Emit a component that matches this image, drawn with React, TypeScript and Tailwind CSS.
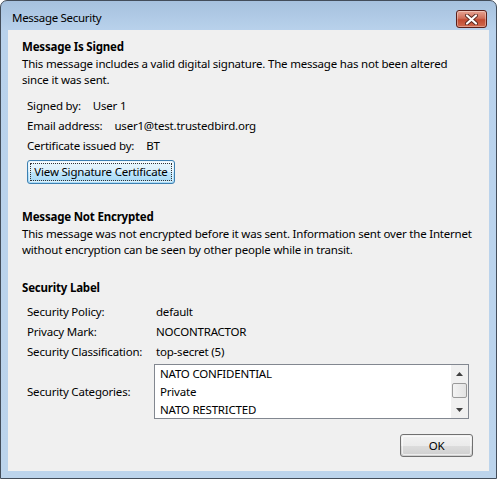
import React from "react";

const font = { fontFamily: '"Noto Sans", "Open Sans", sans-serif' };

function Win7Button({
  children,
  focused,
  className,
}: {
  children: React.ReactNode;
  focused?: boolean;
  className?: string;
}) {
  return (
    <div
      className={
        "relative flex items-center justify-center rounded-[3px] border text-black " +
        (focused
          ? "border-[#3c7fb1] bg-[linear-gradient(#eaf6fd_0%,#d9f0fc_50%,#bee6fd_50%,#a7d9f5_100%)] "
          : "border-[#707070] bg-[linear-gradient(#f2f2f2_0%,#ebebeb_50%,#dddddd_50%,#cfcfcf_100%)] ") +
        (className ?? "")
      }
    >
      <div className="absolute inset-[1px] rounded-[2px] border border-white/60" />
      {focused && (
        <div className="absolute inset-[2px] border border-dotted border-[#333]" />
      )}
      <span className="relative">{children}</span>
    </div>
  );
}

export default function App() {
  return (
    <div
      style={font}
      className="flex h-[479px] w-[497px] flex-col overflow-hidden rounded-t-[7px] border border-[#434d5a] bg-[linear-gradient(#a6c1de_0px,#b9d2ec_30px,#bcd4ec_100%)] text-[11.5px] tracking-[-0.2px] text-black"
    >
      {/* Title bar */}
      <div className="flex h-[29px] shrink-0 items-start justify-between pl-[11px] pr-[9px]">
        <div className="pt-[9px] text-[11.5px] leading-[16px] tracking-[-0.3px] text-black">
          Message Security
        </div>
        <div className="mt-[9px] flex h-[18px] w-[31px] items-center justify-center rounded-[3px] border border-[#5b1f19] bg-[linear-gradient(#e8a493_0%,#d0705b_45%,#c14a31_55%,#d06a4e_100%)] shadow-[inset_0_0_0_1px_rgba(255,255,255,0.35)]">
          <svg width="13" height="11" viewBox="0 0 13 11">
            <path
              d="M2 1.5 L11 9.5 M11 1.5 L2 9.5"
              stroke="#5a2a22"
              strokeWidth="4"
              strokeLinecap="round"
            />
            <path
              d="M2 1.5 L11 9.5 M11 1.5 L2 9.5"
              stroke="#ffffff"
              strokeWidth="2.2"
              strokeLinecap="round"
            />
          </svg>
        </div>
      </div>

      {/* Client area */}
      <div className="mx-[7px] mb-[7px] flex h-[441px] shrink-0 flex-col bg-[#f0f0f0] pl-[14px] pr-[16px] pt-[9px]">
        <div className="font-bold leading-[16px]">Message Is Signed</div>
        <div className="mt-[1px] whitespace-nowrap leading-[16px]">
          This message includes a valid digital signature. The message has not been altered
          <br />
          since it was sent.
        </div>

        <div className="mt-[8px] flex flex-col pl-[5px]">
          <div className="flex h-[20px] items-center gap-[12px]">
            <span>Signed by:</span>
            <span>User 1</span>
          </div>
          <div className="flex h-[20px] items-center gap-[12px]">
            <span>Email address:</span>
            <span>user1@test.trustedbird.org</span>
          </div>
          <div className="flex h-[20px] items-center gap-[12px]">
            <span>Certificate issued by:</span>
            <span>BT</span>
          </div>
          <Win7Button focused className="mt-[4px] h-[24px] w-[148px]">
            View Signature Certificate
          </Win7Button>
        </div>

        <div className="mt-[25px] font-bold leading-[16px]">Message Not Encrypted</div>
        <div className="mt-[1px] whitespace-nowrap leading-[16px]">
          This message was not encrypted before it was sent. Information sent over the Internet
          <br />
          without encryption can be seen by other people while in transit.
        </div>

        <div className="mt-[22px] font-bold leading-[16px]">Security Label</div>
        <div className="mt-[6px] flex flex-col pl-[5px]">
          <div className="flex h-[20px] items-center">
            <span className="w-[129px]">Security Policy:</span>
            <span>default</span>
          </div>
          <div className="flex h-[20px] items-center">
            <span className="w-[129px]">Privacy Mark:</span>
            <span>NOCONTRACTOR</span>
          </div>
          <div className="flex h-[20px] items-center">
            <span className="w-[129px]">Security Classification:</span>
            <span>top-secret (5)</span>
          </div>
          <div className="mt-[2px] flex items-center">
            <span className="w-[127px]">Security Categories:</span>
            <div className="flex h-[55px] w-[315px] border border-[#828790] bg-white">
              <div className="flex flex-1 flex-col pl-[5px] leading-[18px]">
                <div className="h-[18px]">NATO CONFIDENTIAL</div>
                <div className="h-[18px]">Private</div>
                <div className="h-[18px]">NATO RESTRICTED</div>
              </div>
              <div className="flex w-[17px] flex-col items-center bg-[#f0f0f0]">
                <div className="flex h-[17px] w-full items-center justify-center">
                  <svg width="7" height="4" viewBox="0 0 7 4">
                    <path d="M0 4 L3.5 0 L7 4 Z" fill="#404040" />
                  </svg>
                </div>
                <div className="mt-[1px] h-[15px] w-[15px] rounded-[2px] border border-[#9a9a9a] bg-[linear-gradient(90deg,#f3f3f3,#e3e3e3)]" />
                <div className="flex-1" />
                <div className="flex h-[17px] w-full items-center justify-center">
                  <svg width="7" height="4" viewBox="0 0 7 4">
                    <path d="M0 0 L7 0 L3.5 4 Z" fill="#404040" />
                  </svg>
                </div>
              </div>
            </div>
          </div>
        </div>

        <div className="mt-[15px] flex justify-end">
          <Win7Button className="h-[23px] w-[73px]">OK</Win7Button>
        </div>
      </div>
    </div>
  );
}
